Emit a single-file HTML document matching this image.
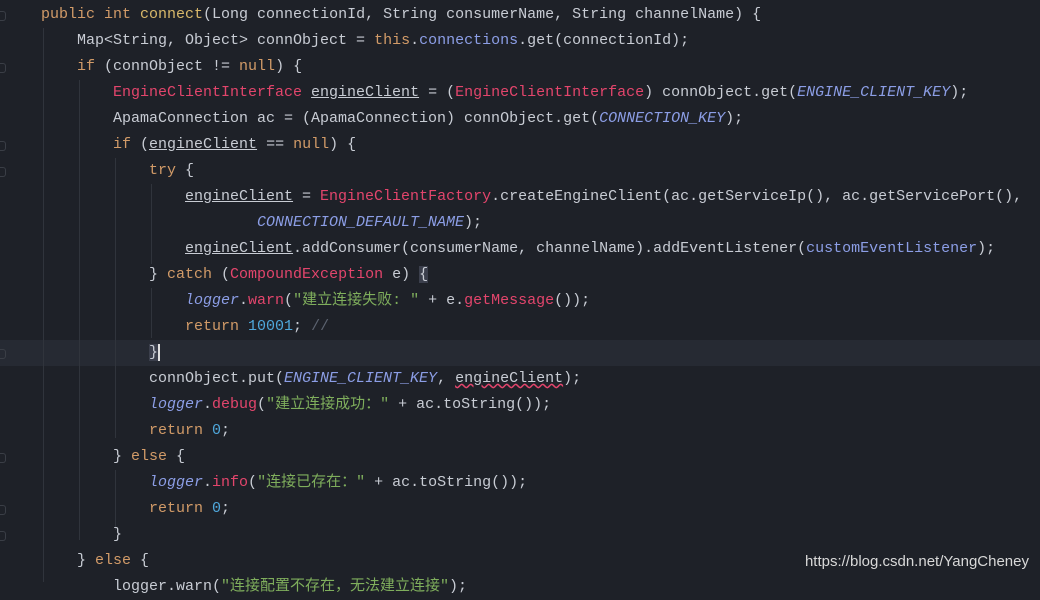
<!DOCTYPE html>
<html><head><meta charset="utf-8"><style>
html,body{margin:0;padding:0;}
body{width:1040px;height:582px;background:#1e2128;overflow:hidden;position:relative;font-family:"Liberation Mono","Noto Sans CJK SC",monospace;font-size:15px;color:#c8ccd4;}
.l{position:absolute;white-space:pre;height:26px;line-height:26px;}
.hl{position:absolute;left:0;top:340px;width:1040px;height:26px;background:#262a33;}
.g{position:absolute;width:1px;background:#30343c;}
.k{color:#d29b68}.f{color:#d8b86a}.t{color:#e3456c}.p{color:#8c9ee6}.i{font-style:italic}
.s{color:#7fae5c}.n{color:#4fa8dc}.c{color:#5c6370}.u{text-decoration:underline}
.w{text-decoration:underline wavy #e3456c}
.cur{background:#3b3f4c;border-right:2px solid #e0e0e0}
.wm{position:absolute;right:11px;top:553px;font-family:"Liberation Sans",sans-serif;font-size:15px;color:#d8d8d8;}
.m{position:absolute;left:0;width:5px;height:8px;border:1px solid #3a3e46;border-left:none;border-radius:0 3px 3px 0}
</style></head><body>
<div class="hl"></div>
<div class="g" style="left:43px;top:28px;height:554px"></div>
<div class="g" style="left:79px;top:80px;height:460px"></div>
<div class="g" style="left:115px;top:158px;height:280px"></div>
<div class="g" style="left:115px;top:470px;height:60px"></div>
<div class="g" style="left:151px;top:184px;height:80px"></div>
<div class="g" style="left:151px;top:288px;height:50px"></div>
<div class="m" style="top:11px"></div><div class="m" style="top:63px"></div><div class="m" style="top:141px"></div><div class="m" style="top:167px"></div><div class="m" style="top:349px"></div><div class="m" style="top:453px"></div><div class="m" style="top:505px"></div><div class="m" style="top:531px"></div>

<div class="l" style="left:41px;top:2px"><span class="k">public int</span> <span class="f">connect</span>(Long connectionId, String consumerName, String channelName) {</div>
<div class="l" style="left:77px;top:28px">Map&lt;String, Object&gt; connObject = <span class="k">this</span>.<span class="p">connections</span>.get(connectionId);</div>
<div class="l" style="left:77px;top:54px"><span class="k">if</span> (connObject != <span class="k">null</span>) {</div>
<div class="l" style="left:113px;top:80px"><span class="t">EngineClientInterface</span> <span class="u">engineClient</span> = (<span class="t">EngineClientInterface</span>) connObject.get(<span class="p i">ENGINE_CLIENT_KEY</span>);</div>
<div class="l" style="left:113px;top:106px">ApamaConnection ac = (ApamaConnection) connObject.get(<span class="p i">CONNECTION_KEY</span>);</div>
<div class="l" style="left:113px;top:132px"><span class="k">if</span> (<span class="u">engineClient</span> == <span class="k">null</span>) {</div>
<div class="l" style="left:149px;top:158px"><span class="k">try</span> {</div>
<div class="l" style="left:185px;top:184px"><span class="u">engineClient</span> = <span class="t">EngineClientFactory</span>.createEngineClient(ac.getServiceIp(), ac.getServicePort(),</div>
<div class="l" style="left:257px;top:210px"><span class="p i">CONNECTION_DEFAULT_NAME</span>);</div>
<div class="l" style="left:185px;top:236px"><span class="u">engineClient</span>.addConsumer(consumerName, channelName).addEventListener(<span class="p">customEventListener</span>);</div>
<div class="l" style="left:149px;top:262px">} <span class="k">catch</span> (<span class="t">CompoundException</span> e) <span class="cur" style="border:none">{</span></div>
<div class="l" style="left:185px;top:288px"><span class="p i">logger</span>.<span class="t">warn</span>(<span class="s">"建立连接失败: "</span> + e.<span class="t">getMessage</span>());</div>
<div class="l" style="left:185px;top:314px"><span class="k">return</span> <span class="n">10001</span>; <span class="c">//</span></div>
<div class="l" style="left:149px;top:340px"><span class="cur">}</span></div>
<div class="l" style="left:149px;top:366px">connObject.put(<span class="p i">ENGINE_CLIENT_KEY</span>, <span class="w">engineClient</span>);</div>
<div class="l" style="left:149px;top:392px"><span class="p i">logger</span>.<span class="t">debug</span>(<span class="s">"建立连接成功："</span> + ac.toString());</div>
<div class="l" style="left:149px;top:418px"><span class="k">return</span> <span class="n">0</span>;</div>
<div class="l" style="left:113px;top:444px">} <span class="k">else</span> {</div>
<div class="l" style="left:149px;top:470px"><span class="p i">logger</span>.<span class="t">info</span>(<span class="s">"连接已存在："</span> + ac.toString());</div>
<div class="l" style="left:149px;top:496px"><span class="k">return</span> <span class="n">0</span>;</div>
<div class="l" style="left:113px;top:522px">}</div>
<div class="l" style="left:77px;top:548px">} <span class="k">else</span> {</div>
<div class="l" style="left:113px;top:574px">logger.warn(<span class="s">"连接配置不存在，无法建立连接"</span>);</div>
<div class="wm">https://blog.csdn.net/YangCheney</div>
</body></html>
